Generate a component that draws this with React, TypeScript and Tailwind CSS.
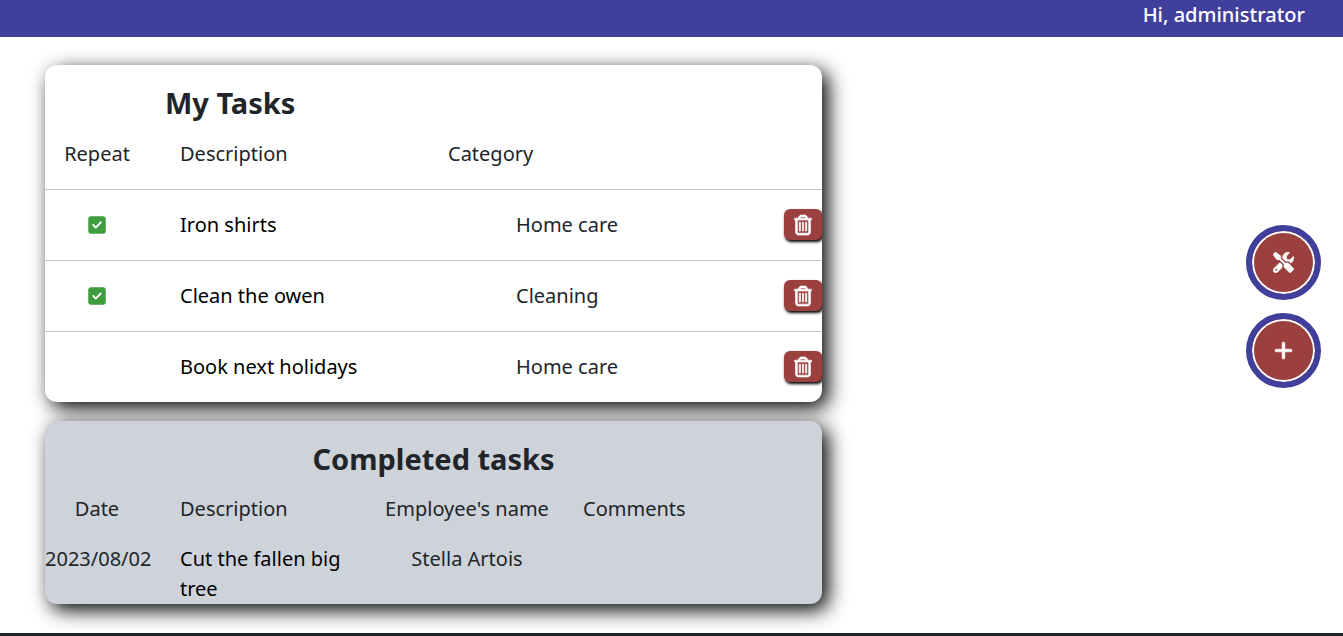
import { FaPlus, FaRegTrashCan, FaScrewdriverWrench, FaSquareCheck } from "react-icons/fa6";

type Task = { repeat: boolean; description: string; category: string };
type CompletedTask = { date: string; description: string; employee: string; comments: string };

const tasks: Task[] = [
  { repeat: true, description: "Iron shirts", category: "Home care" },
  { repeat: true, description: "Clean the owen", category: "Cleaning" },
  { repeat: false, description: "Book next holidays", category: "Home care" },
];

const completed: CompletedTask[] = [
  { date: "2023/08/02", description: "Cut the fallen big tree", employee: "Stella Artois", comments: "" },
];

const card = "overflow-hidden rounded-xl shadow-[6px_6px_20px_#000]";
const roundButton =
  "flex size-[75px] items-center justify-center rounded-full border-6 border-[#403f9c] bg-[#9c3f3f] text-[21px] text-white inset-ring-2 inset-ring-white";

function MyTasks() {
  return (
    <section className={`${card} bg-white`}>
      <h2 className="pt-5 pb-[18px] pl-[120px] text-[29px] leading-9 font-bold">My Tasks</h2>
      <table className="w-full table-fixed">
        <colgroup>
          <col className="w-[104px]" />
          <col />
          <col className="w-[336px]" />
          <col className="w-[38px]" />
        </colgroup>
        <thead>
          <tr className="h-[50px] align-top">
            <th className="font-normal" scope="col">Repeat</th>
            <th className="pl-[31px] text-left font-normal" scope="col">Description</th>
            <th className="text-left font-normal" scope="col">Category</th>
            <th aria-label="Delete" />
          </tr>
        </thead>
        <tbody>
          {tasks.map((task) => (
            <tr key={task.description} className="h-[71px] border-t border-[#c4c5c6]">
              <td>{task.repeat && <FaSquareCheck className="mx-auto text-[20px] text-[#3f9c3f]" />}</td>
              <td className="pl-[31px]">
                <a href="#" className="text-black">{task.description}</a>
              </td>
              <td className="pl-[68px]">{task.category}</td>
              <td>
                <button
                  type="button"
                  aria-label={`Delete ${task.description}`}
                  className="flex h-[31px] w-full items-center justify-center rounded-md bg-[#9c3f3f] text-[20px] text-white shadow-[1px_2px_3px_#000]"
                >
                  <FaRegTrashCan className="overflow-visible stroke-white stroke-16" />
                </button>
              </td>
            </tr>
          ))}
        </tbody>
      </table>
    </section>
  );
}

function CompletedTasks() {
  return (
    <section className={`${card} bg-[#ced3da]`}>
      <h2 className="pt-5 pb-[17px] text-center text-[29px] leading-9 font-bold">Completed tasks</h2>
      <table className="w-full table-fixed">
        <colgroup>
          <col className="w-[104px]" />
          <col className="w-[217px]" />
          <col className="w-[202px]" />
          <col />
        </colgroup>
        <thead>
          <tr className="h-[50px] align-top">
            <th className="font-normal" scope="col">Date</th>
            <th className="pl-[31px] text-left font-normal" scope="col">Description</th>
            <th className="font-normal" scope="col">Employee's name</th>
            <th className="pl-[15px] text-left font-normal" scope="col">Comments</th>
          </tr>
        </thead>
        <tbody>
          {completed.map((task) => (
            <tr key={task.description} className="align-top">
              <td className="text-center whitespace-nowrap">{task.date}</td>
              <td className="pl-[31px]">
                <a href="#" className="text-black">{task.description}</a>
              </td>
              <td className="text-center">{task.employee}</td>
              <td className="pl-[15px]">{task.comments}</td>
            </tr>
          ))}
        </tbody>
      </table>
    </section>
  );
}

export default function App() {
  return (
    <div className="bg-white font-['Noto_Sans',sans-serif] text-[20px] leading-[30px] text-[#212529]">
      <header className="h-[37px] bg-[#403f9c] pr-[38px] text-right font-medium text-white">Hi, administrator</header>
      <div className="flex justify-between gap-6 pt-7 pr-[22px] pb-[29px] pl-[45px]">
        <main className="flex max-w-[777px] grow flex-col gap-[19px]">
          <MyTasks />
          <CompletedTasks />
        </main>
        <nav aria-label="Actions" className="flex flex-col gap-[13px] pt-40">
          <button type="button" aria-label="Tools" className={roundButton}>
            <FaScrewdriverWrench />
          </button>
          <button type="button" aria-label="Add task" className={roundButton}>
            <FaPlus className="overflow-visible stroke-white stroke-16" />
          </button>
        </nav>
      </div>
      <footer className="h-[3px] bg-[#212529]" />
    </div>
  );
}
